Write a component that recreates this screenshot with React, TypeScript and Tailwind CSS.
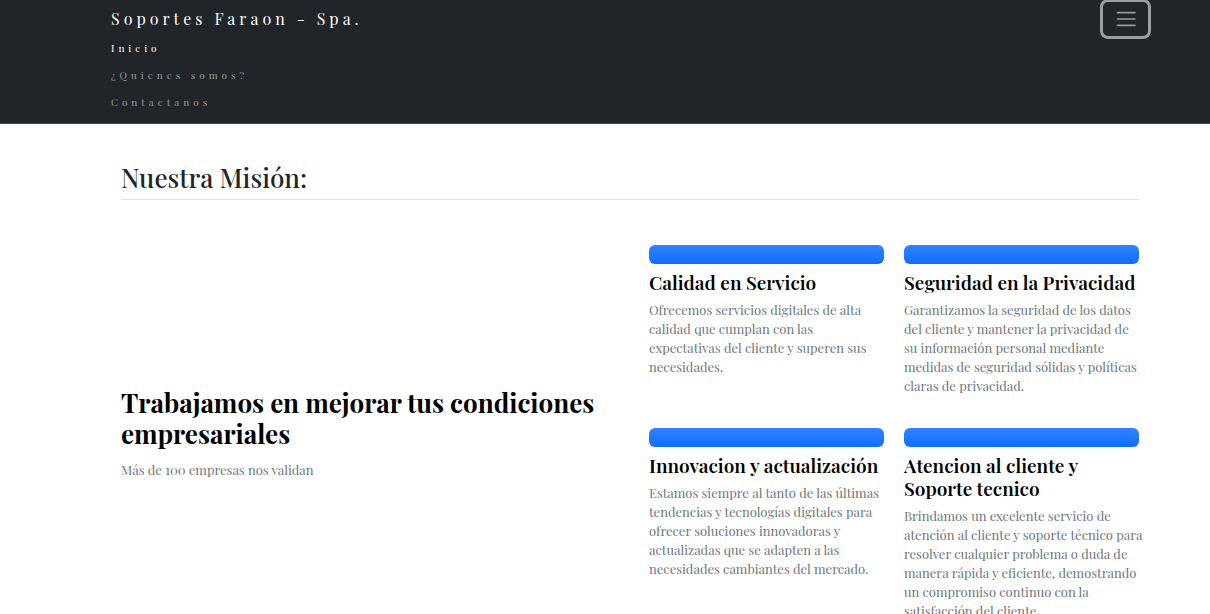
const features = [
  {
    title: "Calidad en Servicio",
    text: "Ofrecemos servicios digitales de alta calidad que cumplan con las expectativas\u00a0del cliente y superen sus necesidades.",
  },
  {
    title: "Seguridad en la Privacidad",
    text: "Garantizamos la seguridad de los datos del cliente y mantener la privacidad de su información personal mediante medidas de seguridad sólidas y políticas claras de privacidad.",
  },
  {
    title: "Innovacion y actualización",
    text: "Estamos siempre al tanto de las últimas tendencias y tecnologías digitales para ofrecer soluciones innovadoras y actualizadas que se adapten a las necesidades cambiantes del mercado.",
  },
  {
    title: "Atencion al cliente y Soporte tecnico",
    text: "Brindamos un excelente servicio de atención al cliente y soporte técnico para resolver cualquier problema o duda de manera rápida y eficiente, demostrando un compromiso continuo con la satisfacción del cliente.",
  },
];

function Header() {
  return (
    <header className="flex items-start justify-between border-b border-[#4a4d51] bg-[#212529] pr-[59px] pb-[7px] pl-[111px]">
      <div className="pt-1.5">
        <a href="#" className="block text-[16px] leading-[26px] tracking-[4px] text-white">
          Soportes Faraon - Spa.
        </a>
        <nav className="mt-[3px] flex flex-col text-[10px] leading-[27px] tracking-[4px] text-[#9b9d9f]">
          <a href="#inicio" className="text-white">Inicio</a>
          <a href="#quienes">¿Quienes somos?</a>
          <a href="#contacto">Contactanos</a>
        </nav>
      </div>
      <button
        type="button"
        aria-label="Menú"
        className="-mt-px flex h-10 w-[51px] items-center justify-center rounded-lg border-[3px] border-[#9b9da0]"
      >
        <svg viewBox="0 0 24 24" className="h-6 w-6" stroke="#97999c" strokeWidth="1.6" strokeLinecap="round">
          <path d="M3.4 5.6h17.6M3.4 12h17.6M3.4 18.4h17.6" />
        </svg>
      </button>
    </header>
  );
}

export default function App() {
  return (
    <div className="bg-white font-['Playfair_Display','Liberation_Serif',serif]">
      <Header />
      <main className="pt-[38px] pr-[71px] pb-12 pl-[121px]">
        <h2 className="border-b border-[#dee2e6] pb-1.5 text-[26px] leading-[31px] font-medium text-[#212529]">
          Nuestra Misión:
        </h2>
        <div className="grid grid-cols-2 items-center gap-[38px] pt-[45px]">
          <section>
            <h3 className="text-[26px] leading-[31px] font-bold text-black">
              Trabajamos en mejorar tus condiciones empresariales
            </h3>
            <p className="mt-[11px] text-[13px] leading-[19px] text-[#6c757d]">Más de 100 empresas nos validan</p>
          </section>
          <section className="grid grid-cols-2 gap-x-5 gap-y-[33px]">
            {features.map((feature) => (
              <article key={feature.title}>
                <div className="h-[19px] rounded-md bg-linear-to-b from-[#3083ff] to-[#0d6efd]" />
                <h4 className="mt-[7px] text-[19px] leading-[23px] font-semibold text-black">{feature.title}</h4>
                <p className="mt-1.5 -mr-1 text-[13px] leading-[19px] text-[#6c757d]">{feature.text}</p>
              </article>
            ))}
          </section>
        </div>
      </main>
    </div>
  );
}
